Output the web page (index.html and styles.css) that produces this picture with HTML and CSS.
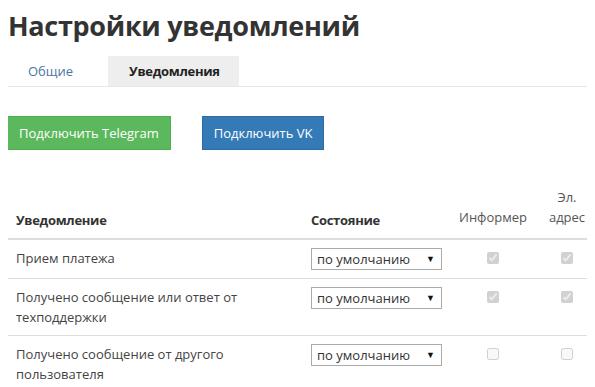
FILE: index.html
```html
<!DOCTYPE html>
<html lang="ru">
<head>
	<meta charset="utf-8">
	<title>Настройки уведомлений</title>
	<link rel="stylesheet" href="styles.css">
</head>
<body>
	<h1 class="page-title">Настройки уведомлений</h1>
	<ul class="tabs">
		<li class="tab"><a href="#">Общие</a></li>
		<li class="tab tab-active"><a href="#">Уведомления</a></li>
	</ul>

	<div class="connect">
		<div class="btn btn-green">Подключить Telegram</div>
		<div class="btn btn-blue">Подключить VK</div>
	</div>

	<table class="notify-table">
		<thead>
			<tr>
				<th class="col-name">Уведомление</th>
				<th class="col-state">Состояние</th>
				<th class="col-check">Информер</th>
				<th class="col-check col-mail">Эл. адрес</th>
			</tr>
		</thead>
		<tbody>
			<tr>
				<td>Прием платежа</td>
				<td><div class="select"><span>по умолчанию</span><span class="arrow">▼</span></div></td>
				<td class="cell-check"><input type="checkbox" checked disabled></td>
				<td class="cell-check"><input type="checkbox" checked disabled></td>
			</tr>
			<tr>
				<td>Получено сообщение или ответ от техподдержки</td>
				<td><div class="select"><span>по умолчанию</span><span class="arrow">▼</span></div></td>
				<td class="cell-check"><input type="checkbox" checked disabled></td>
				<td class="cell-check"><input type="checkbox" checked disabled></td>
			</tr>
			<tr>
				<td>Получено сообщение от другого пользователя</td>
				<td><div class="select"><span>по умолчанию</span><span class="arrow">▼</span></div></td>
				<td class="cell-check"><input type="checkbox" disabled></td>
				<td class="cell-check"><input type="checkbox" disabled></td>
			</tr>
		</tbody>
	</table>
</body>
</html>
```

FILE: styles.css
```css
html {
	overflow: hidden;
}
body {
	margin: 8px;
	font-family: 'Open Sans', sans-serif;
	font-size: 13px;
	line-height: 20px;
	color: #444;
	background: #fff;
}
.page-title {
	margin: 0;
	font-size: 27px;
	line-height: 36px;
	font-weight: 700;
	letter-spacing: -0.3px;
	color: #333;
}
.tabs {
	display: flex;
	margin: 12px -8px 0 0;
	padding: 0;
	list-style: none;
	border-bottom: 1px solid #e8e8e8;
}
.tab {
	margin-right: 15px;
}
.tab a {
	display: block;
	padding: 5px 20px;
	color: #4b76a0;
	text-decoration: none;
}
.tab-active a {
	padding: 5px 19px 5px 21px;
	background: #eee;
	color: #222;
	font-weight: 700;
	letter-spacing: -0.3px;
}
.connect {
	display: flex;
	gap: 31px;
	margin-top: 29px;
}
.btn {
	padding: 6px 11px;
	color: #fff;
	cursor: pointer;
}
.btn-green {
	margin-left: -1px;
	background: #5cb85c;
	border: 1px solid #4cae4c;
}
.btn-blue {
	background: #337ab7;
	border: 1px solid #2e6da4;
}
.notify-table {
	width: 590px;
	margin-top: 29px;
	border-collapse: collapse;
	table-layout: fixed;
}
.notify-table th {
	padding: 8px;
	vertical-align: bottom;
	text-align: left;
	color: #333;
	letter-spacing: -0.3px;
	border-bottom: 2px solid #ddd;
}
.col-name {
	width: 279px;
}
.col-state {
	width: 131px;
}
.notify-table th.col-check {
	width: 70px;
	padding-bottom: 11px;
	text-align: center;
	font-weight: 400;
	letter-spacing: 0;
	color: #555;
}
.notify-table th.col-mail {
	width: 46px;
}
.notify-table td {
	padding: 8px;
	vertical-align: top;
	border-bottom: 1px solid #ddd;
}
.select {
	display: flex;
	justify-content: space-between;
	height: 20px;
	padding: 0 6px 0 5px;
	border: 1px solid #aaa;
	line-height: 20px;
	color: #333;
}
.arrow {
	font-size: 9px;
	color: #111;
}
.cell-check {
	text-align: center;
}
.cell-check input {
	width: 12px;
	height: 12px;
	margin: 4px 0 0;
}
```
